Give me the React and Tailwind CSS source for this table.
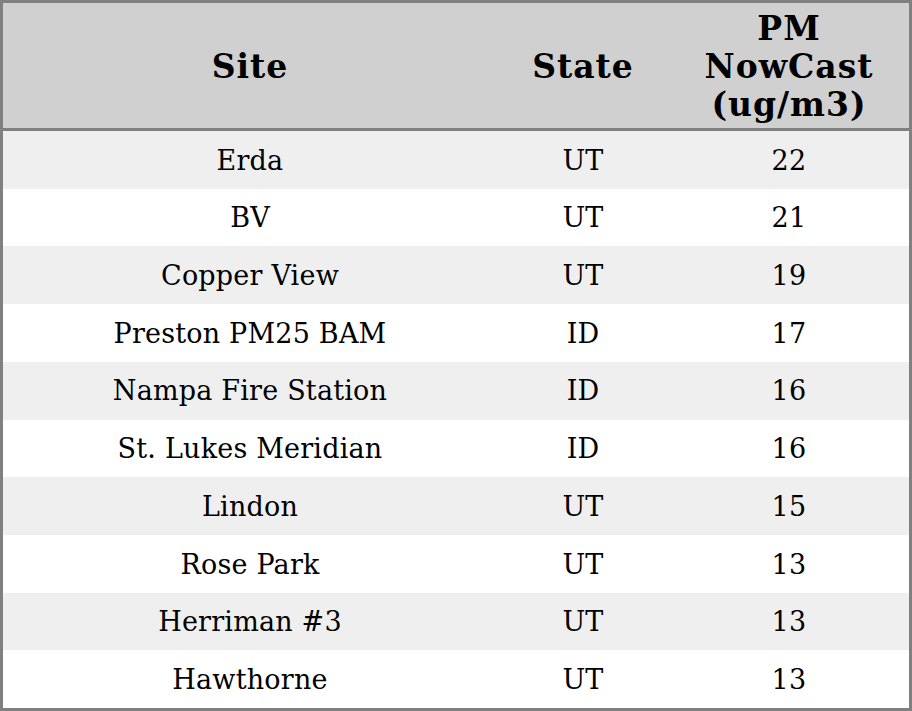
const rows = [
  ["Erda", "UT", "22"],
  ["BV", "UT", "21"],
  ["Copper View", "UT", "19"],
  ["Preston PM25 BAM", "ID", "17"],
  ["Nampa Fire Station", "ID", "16"],
  ["St. Lukes Meridian", "ID", "16"],
  ["Lindon", "UT", "15"],
  ["Rose Park", "UT", "13"],
  ["Herriman #3", "UT", "13"],
  ["Hawthorne", "UT", "13"],
];

export default function App() {
  return (
    <div
      className="w-[912px] h-[711px] border-[3px] border-[#808080] bg-white flex flex-col text-black"
      style={{ fontFamily: '"DejaVu Serif", serif' }}
    >
      <div className="h-[123px] shrink-0 bg-[#d0d0d0] border-b-[3px] border-[#808080] box-content flex items-center pt-[2px] font-bold text-[33px] tracking-[1px] leading-[38px]">
        <div className="w-[494px] text-center">Site</div>
        <div className="w-[172px] text-center">State</div>
        <div className="flex-1 text-center">
          PM
          <br />
          NowCast
          <br />
          (ug/m3)
        </div>
      </div>
      {rows.map((r, i) => (
        <div
          key={i}
          className={
            i % 2 === 0
              ? "flex-1 flex items-center pt-[2px] bg-[#efefef] text-[27px] tracking-[0.2px]"
              : "flex-1 flex items-center pt-[2px] bg-white text-[27px] tracking-[0.2px]"
          }
        >
          <div className="w-[494px] text-center">{r[0]}</div>
          <div className="w-[172px] text-center">{r[1]}</div>
          <div className="flex-1 text-center">{r[2]}</div>
        </div>
      ))}
    </div>
  );
}
